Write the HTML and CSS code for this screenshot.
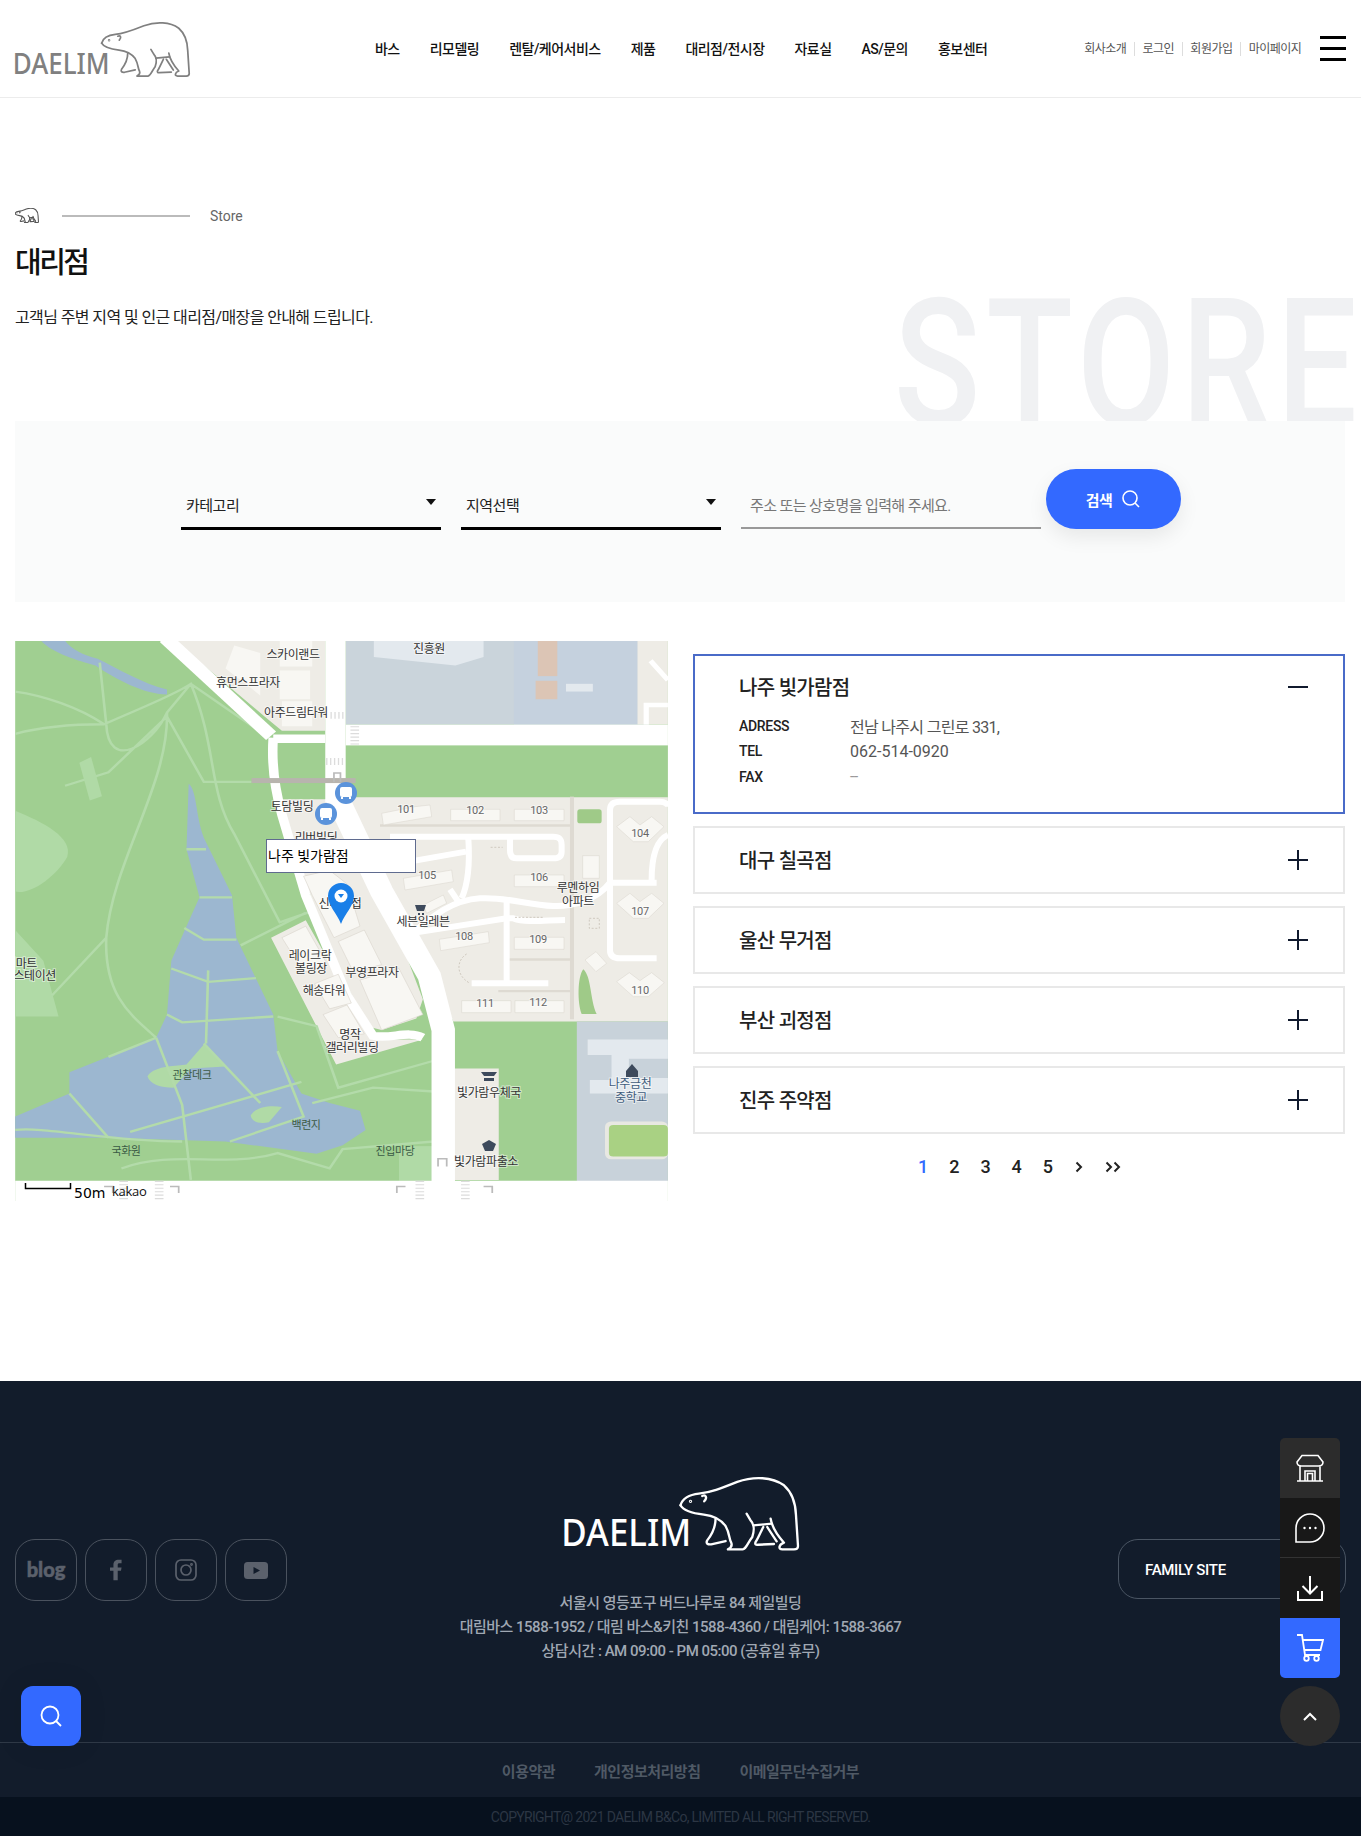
FILE: index.html
```html
<!DOCTYPE html>
<html lang="ko">
<head>
    <meta charset="UTF-8">
    <meta name="viewport" content="width=device-width, initial-scale=1.0">
    <title>대리점 | DAELIM</title>
    <link rel="stylesheet" href="styles.css">
</head>
<body>
    <!-- 로고 곰 모양 -->
    <svg class="svgDefs" width="0" height="0">
        <defs>
            <g id="bear" transform="translate(690 66)" fill="none" stroke="currentColor" stroke-linecap="round" stroke-linejoin="round">
                <path d="M30 100C35 82 55 68 85 65C120 62 150 50 200 30C250 12 305 15 340 40C365 62 375 95 376 130L382 222C382 230 378 232 370 232H335C322 232 324 218 340 212C322 192 305 170 300 140"/>
                <path d="M30 100C38 115 65 124 100 128C130 131 150 142 165 162C178 185 175 200 182 212C186 222 180 228 172 232H215C225 234 230 215 245 195C252 175 250 155 240 145L228 125"/>
                <path d="M135 140C135 165 122 190 110 205C105 215 112 218 122 217L165 207"/>
                <path d="M248 160L303 155M278 165C270 180 262 200 255 210C252 217 256 219 262 218L310 216M290 165L318 208"/>
                <path d="M95 72C105 67 112 76 101 88"/>
                <circle cx="60" cy="88" r="1.500"/>
            </g>
        </defs>
    </svg>

    <header class="siteHeader">
        <a class="logo" href="#">
            <svg class="logoMark" viewBox="0 0 707 217" width="176" height="54">
                <text class="logoText" x="-5" y="203" textLength="389" lengthAdjust="spacingAndGlyphs">DAELIM</text>
                <use href="#bear" transform="translate(-368 -85)"/>
            </svg>
        </a>
        <nav class="mainNav">
            <a href="#">바스</a>
            <a href="#">리모델링</a>
            <a href="#">렌탈/케어서비스</a>
            <a href="#">제품</a>
            <a href="#">대리점/전시장</a>
            <a href="#">자료실</a>
            <a href="#">AS/문의</a>
            <a href="#">홍보센터</a>
        </nav>
        <div class="utilNav">
            <a href="#">회사소개</a>
            <a href="#">로그인</a>
            <a href="#">회원가입</a>
            <a href="#">마이페이지</a>
        </div>
        <button class="hamburger" aria-label="menu"><span></span><span></span><span></span></button>
    </header>

    <section class="hero">
        <div class="heroBg">STORE</div>
        <div class="crumb">
            <svg class="miniBear" viewBox="720 80 360 225" width="24" height="15"><use href="#bear"/></svg>
            <span class="crumbLine"></span>
            <span class="crumbText">Store</span>
        </div>
        <h1>대리점</h1>
        <p class="heroDesc">고객님 주변 지역 및 인근 대리점/매장을 안내해 드립니다.</p>
    </section>

    <section class="searchPanel">
        <div class="selectBox">카테고리</div>
        <div class="selectBox">지역선택</div>
        <div class="keyword">주소 또는 상호명을 입력해 주세요.</div>
        <button class="searchBtn"><span>검색</span>
            <svg viewBox="0 0 20 20" width="20" height="20" fill="none" stroke="#fff" stroke-width="1.6"><circle cx="9" cy="9" r="7"/><path d="M14 14l4 4"/></svg>
        </button>
    </section>

    <main class="storeWrap">
        <div class="mapBox">
            <svg class="mapCanvas" viewBox="0 0 653 560" width="653" height="560">
                <g transform="translate(-15 -11) scale(.4337 .3846)">
                    <rect class="mGreen" x="35" y="28" width="1505" height="1462"/>
                    <!-- 공원 밝은 영역 -->
                    <path class="mLight" d="M35 470C100 500 170 540 155 590C130 640 70 690 35 680ZM35 780L100 860L135 1005H35Z"/>
                    <!-- 회색 구역 -->
                    <rect class="mGray" x="797" y="28" width="700" height="218"/>
                    <rect class="mGrayB" x="1185" y="28" width="285" height="218"/>
                    <path class="mBldg2" d="M862 28H1115V70L1050 92L862 70Z"/>
                    <rect class="mCourt" x="1240" y="28" width="45" height="92"/>
                    <rect class="mCourt" x="1235" y="132" width="50" height="48"/>
                    <rect class="mBldg2" x="1305" y="140" width="62" height="20"/>
                    <path class="mBeige" d="M1470 28H1540V246H1470Z"/>
                    <path class="mRoad" d="M1490 246V195H1540M1500 80L1540 130" stroke-width="12"/>
                    <!-- 왼쪽 위 블록 -->
                    <path class="mBeige" d="M400 28H750V262H650L610 225L500 120Z"/>
                    <path class="mBldg" d="M645 28H720V95H645ZM645 105H715V180H645ZM650 185H720V250H650ZM520 100L600 170L600 60L540 40Z"/>
                    <!-- 상가 블록 -->
                    <path class="mBeige" d="M805 435H1540V1018H1045L1000 900L880 650Z"/>
                    <path class="mBeige" d="M640 440H790L800 470L870 650L975 960L960 1010L880 1040L845 1030L760 830L700 640L655 520Z"/>
                    <path class="mBeige" d="M625 800L705 755L860 1065L975 1065L775 1130Z"/>
                    <path class="mBeige" d="M1047 1140H1150V1430H1047Z"/>
                    <rect class="mSchool" x="1330" y="1018" width="210" height="415"/>
                    <path class="mBldg2" d="M1355 1065H1540V1115H1450V1165H1540V1205H1360V1170H1410V1105H1355Z"/>
                    <rect class="mFieldEdge" x="1395" y="1278" width="145" height="98" rx="14"/>
                    <rect class="mField" x="1404" y="1287" width="136" height="82" rx="10"/>
                    <!-- 호수 -->
                    <path class="mLake" d="M435 400C455 420 450 480 470 540L535 690L545 800L630 1000L640 1095L695 1205L760 1230L830 1250L843 1300L790 1340L730 1362L520 1330L250 1320H35V1265L160 1205V1150L360 1060L385 1000L395 860L430 770L460 695L430 570Z"/>
                    <path class="mLake" d="M95 28H150C165 50 190 65 225 75C270 100 330 140 385 155V168C330 165 270 130 220 92C180 80 120 60 95 28Z"/>
                    <path class="mLight" d="M340 1160C360 1130 410 1135 430 1130L470 1078L520 1135L440 1140L400 1190C370 1190 345 1180 340 1160ZM578 1262C590 1240 620 1235 650 1240L620 1280C600 1285 580 1280 578 1262Z"/>
                    <!-- 공원 길 -->
                    <g class="mPath">
                        <path d="M430 570H475M460 695H535M425 775L470 805H545M395 880L480 915L590 905M480 885L475 1075M385 1000L420 1020L630 1005M360 1060L420 1235L440 1430M470 1075L600 1230M250 1110L360 1060M160 1205L250 1320M300 1305L695 1175M530 1330L700 1265L640 1095M640 1005L730 1030L780 1190L1000 1120"/>
                        <path d="M35 270C100 250 180 245 240 245C330 200 400 170 440 140C500 300 480 420 540 530L645 760L710 735M440 140L385 215C350 300 250 370 245 245M230 85L245 245M35 160C100 170 180 200 240 245M440 140L620 280M150 405L250 370L385 225L470 395H580M385 215C390 400 260 600 245 800C240 950 300 1000 360 1060M245 800L120 950M555 820L705 735M280 1400C400 1350 520 1400 640 1360L760 1400L790 1350L1000 1330M35 1300C100 1290 250 1330 420 1330M720 1230L860 1190L1000 1200"/>
                    </g>
                    <path class="mLight" d="M183 345L210 330L235 432L207 443Z"/>
                    <rect class="mLight" x="920" y="1342" width="80" height="90"/>
                    <!-- 도로 -->
                    <g class="mRoad">
                        <rect class="mRoadFill" x="797" y="246" width="743" height="54"/>
                        <rect class="mRoadFill" x="750" y="28" width="47" height="420"/>
                        <rect class="mRoadFill" x="35" y="1432" width="1505" height="53"/>
                        <path stroke-width="32" d="M380 20L625 275"/>
                        <path stroke-width="22" d="M630 280C625 360 635 420 650 480L705 690L800 950L860 1055C900 1065 940 1040 975 1060"/>
                        <path stroke-width="22" d="M630 283H750"/>
                        <path stroke-width="54" d="M775 430L880 680L990 900L1022 1040V1490"/>
                    </g>
                    <!-- 상가 건물 -->
                    <g class="mBldg mEdge">
                        <path d="M700 640L760 625L800 660L830 770L770 800L720 690ZM780 810L840 780L880 870L815 890ZM830 910L920 880L975 1000L880 1040ZM650 800L705 770L755 870L700 890ZM725 920L780 895L810 970L760 985ZM745 1000L800 975L840 1050L780 1060Z"/>
                    </g>
                    <rect class="mBridge" x="580" y="385" width="240" height="13"/>
                    <!-- 횡단보도 -->
                    <g class="mCross">
                        <path d="M762 222H797" stroke-width="18"/>
                        <path d="M818 250V300" stroke-width="20"/>
                        <path d="M752 342H797" stroke-width="18"/>
                        <path d="M367 1432V1480" stroke-width="20"/>
                        <path d="M968 1432V1480" stroke-width="20"/>
                        <path d="M1073 1432V1480" stroke-width="20"/>
                        <path d="M285 1432V1480" stroke-width="20"/>
                    </g>
                    <path class="mTurn" d="M392 1447H412V1464M1115 1447H1135V1464M935 1447H915V1464M1010 1395V1375H1030V1395M240 1447H260V1464M770 395V372H785V395"/>
                    <rect class="mEdgeLine" x="35" y="1485" width="270" height="5"/>
                    <rect class="mEdgeLine" x="367" y="1485" width="635" height="5"/>
                    <rect class="mEdgeLine" x="1047" y="1485" width="493" height="5"/>
                </g>

                <!-- 아파트 단지 -->
                <g transform="translate(325 149) scale(.3333)">
                    <rect class="mWalk" x="690" y="20" width="12" height="668"/>
                    <path class="mWalk" d="M120 103H690V110H120ZM505 505H690V512H505ZM475 600H690V607H475Z"/>
                    <rect class="mSmallGreen" x="712" y="58" width="73" height="42" rx="8"/>
                    <path class="mSmallGreen" d="M730 538C712 560 712 640 725 672H770C750 630 755 560 730 538Z"/>
                    <g class="mRoad" stroke-width="18">
                        <path d="M150 140H640C660 140 665 150 665 165V185C665 200 655 205 640 205H530C515 205 510 195 510 180V140"/>
                        <path d="M385 145C390 220 385 280 365 325"/>
                        <path d="M225 212L378 185"/>
                        <path d="M330 298L355 335"/>
                        <path d="M215 432C280 375 340 330 420 325C500 320 560 345 640 348C700 350 770 330 810 278H950"/>
                        <path d="M810 278V60C810 42 822 35 840 35H960C975 35 984 42 984 50"/>
                        <path d="M984 135C950 150 935 200 935 270"/>
                        <path d="M810 278V480C810 498 822 505 840 505H950"/>
                        <path d="M500 330V580"/>
                        <path d="M395 580H625"/>
                        <path d="M225 428L500 385H520C560 400 620 390 675 390"/>
                    </g>
                    <g class="mBldg mEdge">
                        <path d="M125 70L175 60L225 50L270 45L275 80L130 105Z"/>
                        <path d="M332 58H480V92H332ZM523 58H672V92H523ZM523 255H672V290H523ZM523 442H672V478H523ZM365 632H513V668H365ZM525 632H672V668H525Z"/>
                        <path d="M190 265L335 240L340 275L195 300ZM298 448L445 425L448 458L302 482Z"/>
                        <path d="M830 110L870 80L900 105L935 80L972 110L925 155H880Z"/>
                        <path d="M830 340L870 310L900 335L935 310L972 340L925 385H880Z"/>
                        <path d="M830 575L868 548L900 572L935 548L973 578L925 620H880Z"/>
                        <path d="M728 197H778V265H728ZM735 510L768 485L800 520L768 545ZM250 345L310 315L320 340L260 370Z"/>
                    </g>
                    <path class="mDash" d="M380 492C350 510 345 555 390 580M525 382H612M452 172H488M748 385H778V415H748Z"/>
                </g>

                <g class="mapLabels">
                    <text x="278" y="18">스카이랜드</text>
                    <text x="233" y="46">휴먼스프라자</text>
                    <text x="281" y="76">아주드림타워</text>
                    <text x="414" y="12">진흥원</text>
                    <text x="277" y="170">토담빌딩</text>
                    <text x="301" y="201">리버빌딩</text>
                    <text x="325" y="267">신나라접</text>
                    <text x="295" y="319">레이크락</text>
                    <text x="296" y="332">볼링장</text>
                    <text x="357" y="336">부영프라자</text>
                    <text x="309" y="354">해송타워</text>
                    <text x="335" y="398">명작</text>
                    <text x="337" y="411">갤러리빌딩</text>
                    <text x="563" y="251">루멘하임</text>
                    <text x="563" y="265">아파트</text>
                    <text x="408" y="285">세븐일레븐</text>
                    <text x="474" y="456">빛가람우체국</text>
                    <text x="471" y="525">빛가람파출소</text>
                    <text x="22" y="327" class="endAlign">이마트</text>
                    <text x="41" y="339" class="endAlign">주유스테이션</text>
                </g>
                <g class="mapLabels numLabels">
                    <text x="391" y="172">101</text><text x="460" y="173">102</text><text x="524" y="173">103</text>
                    <text x="625" y="196">104</text><text x="412" y="238">105</text><text x="524" y="240">106</text>
                    <text x="625" y="274">107</text><text x="449" y="299">108</text><text x="523" y="302">109</text>
                    <text x="625" y="353">110</text><text x="470" y="366">111</text><text x="523" y="365">112</text>
                </g>
                <g class="mapLabels parkLabels">
                    <text x="177" y="438">관찰데크</text>
                    <text x="291" y="488">백련지</text>
                    <text x="111" y="514">국화원</text>
                    <text x="380" y="514">진입마당</text>
                </g>
                <g class="mapLabels schoolLabels">
                    <text x="615" y="447">나주금천</text>
                    <text x="616" y="461">중학교</text>
                </g>
                <path class="mIconDark" d="M623 430L617 423L611 430V436H623Z"/>
                <path class="mIconDark" d="M466 431H482L479 435H469ZM469 437H479V440H469Z"/>
                <path class="mIconDark" d="M467 503L474 499L481 503L478 510H470Z"/>
                <path class="mIconDark" d="M400 264H411L409 270H402ZM403 272h2v2h-2ZM407 272h2v2h-2Z"/>

                <!-- 버스 정류장 -->
                <g class="busStop" transform="translate(331 152)">
                    <circle r="11"/><rect x="-6" y="-6" width="12" height="10" rx="2"/><path d="M-4 6V4M4 6V4"/>
                </g>
                <g class="busStop" transform="translate(311 173)">
                    <circle r="11"/><rect x="-6" y="-6" width="12" height="10" rx="2"/><path d="M-4 6V4M4 6V4"/>
                </g>

                <!-- 지도 핀 -->
                <path class="mapPin" d="M326 283C322 272 313 265 313 255A13 13 0 0 1 339 255C339 265 330 272 326 283Z"/>
                <circle cx="326" cy="255" r="6.500" fill="#fff"/>
                <path class="mapPin" d="M323 253H329L326 257Z"/>

                <!-- 축척 -->
                <path class="scaleBar" d="M10.500 542V547.500H55.500V542"/>
                <text class="scaleText" x="59" y="557">50m</text>
                <text class="kakaoText" x="97" y="555">kakao</text>
            </svg>
            <div class="mapTip">나주 빛가람점</div>
        </div>

        <div class="storeList">
            <div class="storeCard isOpen">
                <div class="storeHead">
                    <strong>나주 빛가람점</strong>
                    <span class="toggle isMinus"></span>
                </div>
                <dl class="storeInfo">
                    <dt>ADRESS</dt><dd>전남 나주시 그린로 331,</dd>
                    <dt>TEL</dt><dd class="telNum">062-514-0920</dd>
                    <dt>FAX</dt><dd class="dimText">--</dd>
                </dl>
            </div>
            <div class="storeCard"><div class="storeHead"><strong>대구 칠곡점</strong><span class="toggle"></span></div></div>
            <div class="storeCard"><div class="storeHead"><strong>울산 무거점</strong><span class="toggle"></span></div></div>
            <div class="storeCard"><div class="storeHead"><strong>부산 괴정점</strong><span class="toggle"></span></div></div>
            <div class="storeCard"><div class="storeHead"><strong>진주 주약점</strong><span class="toggle"></span></div></div>

            <div class="pager">
                <a class="isCurrent" href="#">1</a>
                <a href="#">2</a>
                <a href="#">3</a>
                <a href="#">4</a>
                <a href="#">5</a>
                <a href="#"><svg viewBox="0 0 10 12" width="10" height="12" fill="none" stroke="#222" stroke-width="2"><path d="M2.500 1.500L7 6L2.500 10.500"/></svg></a>
                <a href="#"><svg viewBox="0 0 17 12" width="17" height="12" fill="none" stroke="#222" stroke-width="2"><path d="M1.500 1.500L6 6L1.500 10.500M9.500 1.500L14 6L9.500 10.500"/></svg></a>
            </div>
        </div>
    </main>

    <footer class="siteFooter">
        <div class="footerMain">
            <div class="socials">
                <a class="socialBtn blogMark" href="#">blog</a>
                <a class="socialBtn" href="#">
                    <svg viewBox="0 0 14 24" width="12" height="22"><path fill="#5b616c" d="M4 24V13H0V9H4V6C4 2 6.500 0 10 0H13.500V4H11C9.500 4 9 4.800 9 6V9H13.500L12.800 13H9V24Z"/></svg>
                </a>
                <a class="socialBtn" href="#">
                    <svg viewBox="0 0 22 22" width="22" height="22" fill="none" stroke="#5b616c" stroke-width="1.700"><rect x="1" y="1" width="20" height="20" rx="5"/><circle cx="11" cy="11" r="5"/><circle cx="16.500" cy="5.500" r=".6"/></svg>
                </a>
                <a class="socialBtn" href="#">
                    <svg viewBox="0 0 24 17" width="24" height="17"><rect width="24" height="17" rx="3.500" fill="#5b616c"/><path d="M9.500 5L16 8.500L9.500 12Z" fill="#121c2b"/></svg>
                </a>
            </div>
            <div class="footerCenter">
                <svg class="logoMark isWhite" viewBox="0 0 707 217" width="236" height="73">
                    <text class="logoText" x="-5" y="203" textLength="389" lengthAdjust="spacingAndGlyphs">DAELIM</text>
                    <use href="#bear" transform="translate(-368 -85)"/>
                </svg>
                <address>
                    서울시 영등포구 버드나루로 84 제일빌딩<br>
                    대림바스 1588-1952 / 대림 바스&amp;키친 1588-4360 / 대림케어: 1588-3667<br>
                    상담시간 : AM 09:00 - PM 05:00 (공휴일 휴무)
                </address>
            </div>
            <div class="familySite">FAMILY SITE</div>
        </div>
        <div class="footerLinks">
            <a href="#">이용약관</a>
            <a href="#">개인정보처리방침</a>
            <a href="#">이메일무단수집거부</a>
        </div>
        <div class="copyright">COPYRIGHT@ 2021 DAELIM B&amp;Co, LIMITED ALL RIGHT RESERVED.</div>
    </footer>

    <!-- 떠있는 버튼 -->
    <a class="floatSearch" href="#">
        <svg viewBox="0 0 22 22" width="22" height="22" fill="none" stroke="#fff" stroke-width="1.800"><circle cx="10" cy="10" r="8.500"/><path d="M16 16L21 21"/></svg>
    </a>
    <div class="quickMenu">
        <a class="quickBtn isStore" href="#">
            <svg viewBox="0 0 28 28" width="28" height="28" fill="none" stroke="#fff" stroke-width="1.600"><path d="M6 1.500H22L27 8C27 11 25 12 22.500 12H5.500C3 12 1 11 1 8ZM4 12V27M24 12V27M1 27H27M9 27V17H19V27M11.500 27V19.500H16.500V27"/></svg>
        </a>
        <a class="quickBtn isChat" href="#">
            <svg viewBox="0 0 30 30" width="30" height="30" fill="none" stroke="#fff" stroke-width="1.600"><path d="M1 29V15A14 14 0 1 1 15 29Z"/><circle cx="9.500" cy="15" r="1.200" fill="#fff" stroke="none"/><circle cx="15" cy="15" r="1.200" fill="#fff" stroke="none"/><circle cx="20.500" cy="15" r="1.200" fill="#fff" stroke="none"/></svg>
        </a>
        <a class="quickBtn isDown" href="#">
            <svg viewBox="0 0 26 26" width="26" height="26" fill="none" stroke="#fff" stroke-width="2"><path d="M13 1V18M5.500 11L13 18.500L20.500 11M1 16V25H25V16"/></svg>
        </a>
        <a class="quickBtn isCart" href="#">
            <svg viewBox="0 0 28 28" width="28" height="28" fill="none" stroke="#fff" stroke-width="1.800"><path d="M1 1H6L9 21H24M7 6H27L24.500 16H8.500"/><circle cx="10.500" cy="24.500" r="2.300"/><circle cx="20.500" cy="24.500" r="2.300"/></svg>
        </a>
        <a class="quickTop" href="#">
            <svg viewBox="0 0 14 9" width="14" height="9" fill="none" stroke="#fff" stroke-width="2"><path d="M1 8L7 2L13 8"/></svg>
        </a>
    </div>
</body>
</html>
```

FILE: styles.css
```css
* {
    box-sizing: border-box;
}

html, body {
    margin: 0;
    padding: 0;
}

body {
    font-family: Roboto, "Noto Sans CJK KR", sans-serif;
    background-color: #fff;
    color: #111;
    width: 1361px;
    overflow-x: hidden;
}

a {
    color: inherit;
    text-decoration: none;
}

.svgDefs {
    position: absolute;
}

/* header */
.siteHeader {
    display: flex;
    align-items: center;
    height: 98px;
    padding: 0 15px 0 14px;
    border-bottom: 1px solid #ececec;
}

.logo {
    display: flex;
    width: 176px;
    margin-top: 3px;
}

.logoMark {
    color: #808080;
    stroke-width: 7;
    overflow: visible;
}

.logoMark.isWhite {
    color: #fff;
}

.logoText {
    font-family: "Noto Sans", sans-serif;
    font-size: 116px;
    font-weight: 500;
    fill: currentColor;
    stroke: none;
}

.mainNav {
    display: flex;
    gap: 30px;
    margin: -2px 0 0 185px;
    font-size: 14px;
    font-weight: 500;
    letter-spacing: -0.52px;
    color: #111;
}

.utilNav {
    display: flex;
    margin-left: auto;
    font-size: 12px;
    letter-spacing: -0.5px;
    color: #555;
}

.utilNav a {
    padding: 0 7.6px;
    border-left: 1px solid #ddd;
    line-height: 14px;
}

.utilNav a:first-child {
    border-left: 0;
}

.hamburger {
    display: flex;
    flex-direction: column;
    justify-content: space-between;
    width: 26px;
    height: 25px;
    margin-left: 11px;
    padding: 0;
    border: 0;
    background: none;
}

.hamburger span {
    height: 3px;
    background-color: #000;
}

/* hero */
.hero {
    position: relative;
    height: 323px;
    padding: 110px 15px 0;
    overflow: hidden;
}

.heroBg {
    position: absolute;
    top: 177px;
    left: 894px;
    font-family: Roboto, sans-serif;
    font-size: 178px;
    font-weight: 500;
    line-height: 1;
    letter-spacing: 7.5px;
    color: #f0f1f3;
    white-space: nowrap;
    transform: scaleX(0.8);
    transform-origin: left top;
}

.crumb {
    position: relative;
    display: flex;
    align-items: center;
    height: 15px;
}

.miniBear {
    color: #555;
    stroke-width: 16;
}

.crumbLine {
    width: 128px;
    height: 2px;
    margin-left: 23px;
    background-color: #bbb;
}

.crumbText {
    margin-left: 20px;
    font-size: 14px;
    color: #666;
}

.hero h1 {
    position: relative;
    margin: 20px 0 0;
    font-size: 29px;
    font-weight: 500;
    line-height: 40px;
    letter-spacing: -2.5px;
    color: #111;
}

.heroDesc {
    position: relative;
    margin: 23px 0 0;
    font-size: 16px;
    line-height: 24px;
    letter-spacing: -0.6px;
    color: #222;
}

/* search */
.searchPanel {
    display: flex;
    align-items: flex-start;
    height: 181px;
    margin: 0 16px 0 15px;
    padding: 48px 0 0 166px;
    background-color: #fafbfb;
}

.selectBox {
    position: relative;
    width: 260px;
    height: 61px;
    margin-right: 20px;
    padding: 26px 5px 0;
    border-bottom: 3px solid #000;
    font-size: 15px;
    line-height: 22px;
    letter-spacing: -0.5px;
    color: #222;
}

.selectBox::after {
    content: "";
    position: absolute;
    top: 30px;
    right: 5px;
    border-style: solid;
    border-width: 6px 5px 0;
    border-color: #111 transparent transparent;
}

.keyword {
    width: 300px;
    height: 60px;
    padding: 26px 9px 0;
    border-bottom: 2px solid #999;
    font-size: 15px;
    line-height: 22px;
    letter-spacing: -0.6px;
    color: #777;
}

.searchBtn {
    display: flex;
    align-items: center;
    justify-content: center;
    gap: 9px;
    width: 135px;
    height: 60px;
    margin-left: 5px;
    border: 0;
    border-radius: 30px;
    background-color: #3369ff;
    box-shadow: 0 8px 20px rgba(0, 0, 0, 0.08);
    font-family: inherit;
    font-size: 15px;
    font-weight: 700;
    letter-spacing: -0.5px;
    color: #fff;
}

/* map and list */
.storeWrap {
    display: flex;
    align-items: flex-start;
    gap: 25px;
    height: 779px;
    padding: 39px 16px 0 15px;
}

.mapBox {
    position: relative;
    flex: none;
    width: 653px;
    height: 560px;
    overflow: hidden;
}

.mapCanvas {
    display: block;
    overflow: hidden;
}

.mGreen { fill: #a0cf91; }
.mLight { fill: #b0daa6; }
.mGray { fill: #cad4db; }
.mGrayB { fill: #c5d1de; }
.mBldg2 { fill: #e3e9ee; }
.mCourt { fill: #dcc5b5; }
.mBeige { fill: #eeece6; }
.mBldg { fill: #f8f7f3; }
.mEdge { stroke: #d9d5cd; stroke-width: 1.5; }
.mSchool { fill: #c8d2da; }
.mField { fill: #a9d183; }
.mFieldEdge { fill: #e8e8e2; }
.mLake { fill: #9cb7d0; }
.mSmallGreen { fill: #9fca88; }
.mWalk { fill: #dedad2; }
.mBridge { fill: #b8b4ae; }
.mEdgeLine { fill: #cfcfcf; }
.mRoadFill { fill: #fff; stroke: none; }
.mRoad { fill: none; stroke: #fff; stroke-linecap: butt; }

.mDash {
    fill: none;
    stroke: #cfc9bf;
    stroke-width: 3;
    stroke-dasharray: 6 5;
}

.mPath {
    fill: none;
    stroke: #b3dbaa;
    stroke-width: 6;
}

.mCross {
    fill: none;
    stroke: #dcdcdc;
    stroke-dasharray: 3 6;
}

.mTurn {
    fill: none;
    stroke: #bbb;
    stroke-width: 4;
}

.mIconDark { fill: #3d4a5c; }

.mapLabels text {
    font-size: 12px;
    letter-spacing: -0.4px;
    text-anchor: middle;
    fill: #333;
    stroke: #fff;
    stroke-width: 2px;
    stroke-opacity: 0.5;
    paint-order: stroke;
}

.mapLabels .endAlign {
    text-anchor: end;
}

.numLabels text {
    font-size: 11px;
    fill: #666;
}

.parkLabels text {
    font-size: 11px;
    fill: #3b5a45;
    stroke: none;
}

.schoolLabels text {
    fill: #3f5c7c;
}

.busStop circle {
    fill: #5b93db;
}

.busStop rect {
    fill: #fff;
}

.busStop path {
    stroke: #fff;
    stroke-width: 2;
}

.mapPin {
    fill: #1a7fe8;
}

.scaleBar {
    fill: none;
    stroke: #000;
    stroke-width: 1.5;
}

.scaleText {
    font-family: "DejaVu Sans", sans-serif;
    font-size: 14px;
    fill: #000;
}

.kakaoText {
    font-family: "Open Sans", sans-serif;
    font-size: 13px;
    letter-spacing: -0.3px;
    fill: #111;
}

.mapTip {
    position: absolute;
    top: 198px;
    left: 251px;
    width: 150px;
    height: 34px;
    padding-left: 1px;
    border: 1px solid #5f6b8f;
    background-color: #fff;
    font-size: 14px;
    line-height: 32px;
    color: #000;
}

.storeList {
    flex: 1;
    padding-top: 13px;
}

.storeCard {
    margin-bottom: 12px;
    border: 2px solid #e8e8e8;
}

.storeCard.isOpen {
    height: 160px;
    border-color: #4a6bc8;
}

.storeHead {
    display: flex;
    align-items: center;
    justify-content: space-between;
    height: 64px;
    padding: 0 35px 2px 44px;
    font-size: 20px;
    letter-spacing: -0.7px;
    color: #222;
}

.storeHead strong {
    font-weight: 500;
}

.storeCard.isOpen .storeHead {
    height: 63px;
}

.toggle {
    position: relative;
    width: 20px;
    height: 20px;
    margin-top: 2px;
}

.toggle.isMinus {
    margin-top: 0;
}

.toggle::before,
.toggle::after {
    content: "";
    position: absolute;
    background-color: #111a2e;
}

.toggle::before {
    top: 9px;
    left: 0;
    width: 20px;
    height: 2px;
}

.toggle::after {
    top: 0;
    left: 9px;
    width: 2px;
    height: 20px;
}

.toggle.isMinus::after {
    display: none;
}

.storeInfo {
    display: grid;
    grid-template-columns: 111px 1fr;
    grid-auto-rows: 25.5px;
    align-items: center;
    margin: -6px 0 0 44px;
}

.storeInfo dt {
    font-size: 14px;
    font-weight: 500;
    letter-spacing: -0.3px;
    color: #222;
}

.storeInfo dd {
    margin: 0;
    font-size: 16px;
    letter-spacing: -0.7px;
    color: #555;
}

.storeInfo .telNum {
    letter-spacing: 0;
}

.storeInfo .dimText {
    color: #999;
}

.pager {
    display: flex;
    align-items: center;
    justify-content: center;
    gap: 21px;
    margin-top: 19px;
    padding-left: 2px;
    font-size: 18px;
    font-weight: 500;
    color: #222;
}

.pager a {
    display: flex;
    line-height: 28px;
    align-items: center;
}

.pager .isCurrent {
    color: #3369ff;
}

/* footer */
.siteFooter {
    height: 455px;
    background-color: #121c2b;
}

.footerMain {
    position: relative;
    display: flex;
    justify-content: space-between;
    height: 362px;
    padding: 158px 15px 0;
    border-bottom: 1px solid #2f3947;
}

.socials {
    display: flex;
    gap: 8px;
}

.socialBtn {
    display: flex;
    align-items: center;
    justify-content: center;
    width: 62px;
    height: 62px;
    border: 1px solid #4a525e;
    border-radius: 20px;
}

.blogMark {
    font-family: Lato, sans-serif;
    font-size: 20px;
    font-weight: 900;
    padding-bottom: 2px;
    -webkit-text-stroke: 0.5px #5b616c;
    color: #5b616c;
}

.footerCenter {
    position: absolute;
    top: 97px;
    left: 0;
    right: 0;
    text-align: center;
}

.footerCenter svg {
    display: block;
    margin: 0 auto;
}

.footerCenter address {
    margin-top: 40px;
    font-style: normal;
    font-size: 15px;
    font-weight: 500;
    line-height: 24px;
    letter-spacing: -0.5px;
    color: #a0a8b3;
}

.familySite {
    width: 228px;
    height: 60px;
    padding-left: 26px;
    border: 1px solid #4a5563;
    border-radius: 20px;
    font-size: 15px;
    font-weight: 500;
    line-height: 60px;
    letter-spacing: -0.3px;
    color: #fff;
}

.footerLinks {
    display: flex;
    justify-content: center;
    gap: 39px;
    height: 54px;
    padding-top: 2px;
    font-size: 15px;
    font-weight: 700;
    line-height: 54px;
    letter-spacing: -0.5px;
    color: #4f5965;
}

.copyright {
    height: 39px;
    background-color: #07111e;
    font-size: 14px;
    line-height: 40px;
    letter-spacing: -0.7px;
    text-align: center;
    color: #2c3644;
}

/* floating buttons */
.floatSearch {
    position: fixed;
    left: 21px;
    bottom: 90px;
    display: flex;
    align-items: center;
    justify-content: center;
    width: 60px;
    height: 60px;
    border-radius: 12px;
    background-color: #3369ff;
    box-shadow: 0 0 30px rgba(0, 0, 0, 0.08);
}

.quickMenu {
    position: fixed;
    right: 21px;
    bottom: 90px;
    display: flex;
    flex-direction: column;
    width: 60px;
}

.quickBtn {
    display: flex;
    align-items: center;
    justify-content: center;
    height: 60px;
}

.isStore {
    background-color: #2c2c2c;
    border-radius: 5px 5px 0 0;
}

.isChat,
.isDown {
    background-color: #181818;
}

.isChat {
    border-bottom: 1px solid #333;
}

.isCart {
    background-color: #3369ff;
    border-radius: 0 0 5px 5px;
}

.quickTop {
    display: flex;
    align-items: center;
    justify-content: center;
    height: 60px;
    margin-top: 8px;
    border-radius: 50%;
    background-color: #2c2c2c;
}
```
